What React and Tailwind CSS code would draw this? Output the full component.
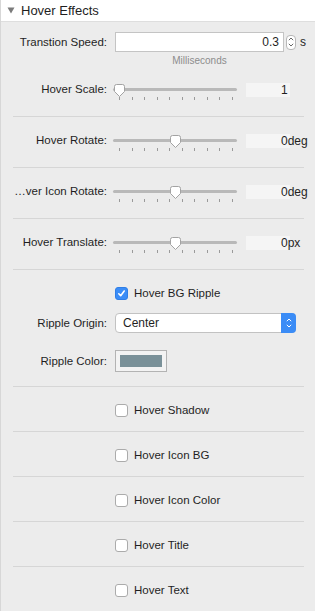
import React from 'react';

const sliders = [
    { label: 'Hover Scale:', value: '1', pos: 0 },
    { label: 'Hover Rotate:', value: '0deg', pos: 0.5 },
    { label: '…ver Icon Rotate:', value: '0deg', pos: 0.5 },
    { label: 'Hover Translate:', value: '0px', pos: 0.5 },
];

const toggles = ['Hover Shadow', 'Hover Icon BG', 'Hover Icon Color', 'Hover Title', 'Hover Text'];

function Divider() {
    return <div className="ml-[12px] mr-[11px] h-px bg-[#d6d6d6]" />;
}

function Label({ children }) {
    return (
        <div className="w-[106px] shrink-0 text-right text-[11.5px] leading-[14px] whitespace-nowrap text-[#1f1f1f]">
            {children}
        </div>
    );
}

function Thumb() {
    return (
        <svg width="13" height="15" viewBox="0 0 13 15">
            <path
                d="M1.5 3.5 A2 2 0 0 1 3.5 1.5 H9.5 A2 2 0 0 1 11.5 3.5 V8.5 L6.5 13.5 L1.5 8.5 Z"
                fill="#fff"
                stroke="#a3a3a3"
                strokeWidth="1"
            />
        </svg>
    );
}

function SliderRow({ label, value, pos }) {
    return (
        <div className="flex items-start h-[20px]">
            <Label>{label}</Label>
            <div className="relative ml-[6px] w-[124px] h-[20px]">
                <div className="mt-[6px] h-[3px] rounded-full bg-[#b9b9b9]" />
                <div className="mt-[6px] flex justify-between pl-[6px] pr-[4px]">
                    {Array.from({ length: 10 }).map((_, i) => (
                        <div key={i} className="w-px h-[3px] bg-[#9a9a9a]" />
                    ))}
                </div>
                <div className="absolute top-[1px]" style={{ left: pos * 111 }}>
                    <Thumb />
                </div>
            </div>
            <div className="ml-[9px] mt-[1px] w-[44px] h-[14px] bg-[#f5f5f5] pl-[35px] text-[12px] leading-[14px] whitespace-nowrap text-[#1f1f1f]">
                {value}
            </div>
        </div>
    );
}

function Checkbox({ checked, label }) {
    return (
        <div className="flex items-center h-[14px] pl-[114px]">
            {checked ? (
                <div className="w-[13px] h-[13px] rounded-[3px] bg-[#3b8df7] border border-[#2f7ee6] flex items-center justify-center">
                    <svg width="9" height="9" viewBox="0 0 9 9">
                        <path d="M1.8 4.8 L3.7 6.7 L7.2 2" fill="none" stroke="#fff" strokeWidth="1.6" strokeLinecap="round" strokeLinejoin="round" />
                    </svg>
                </div>
            ) : (
                <div className="w-[13px] h-[13px] rounded-[3px] bg-white border border-[#ababab]" />
            )}
            <span className="ml-[6px] text-[11.5px] leading-[14px] text-[#1f1f1f] whitespace-nowrap">{label}</span>
        </div>
    );
}

export default function App() {
    return (
        <div className="w-[315px] min-h-[611px] bg-[#ececec] border-l border-[#d7d7d7] font-['Liberation_Sans',Arial,sans-serif]">
            {/* header */}
            <div className="h-[22px] bg-white border-b border-[#dedede] flex items-center">
                <svg className="ml-[6px]" width="8" height="7" viewBox="0 0 8 7">
                    <path d="M0.5 0.5 H7.5 L4 6.5 Z" fill="#7b7b7b" />
                </svg>
                <span className="ml-[6px] text-[13px] leading-[16px] text-[#1e1e1e]">Hover Effects</span>
            </div>

            {/* speed + scale */}
            <div className="pt-[10px] pb-[14px]">
                <div className="flex items-center h-[20px]">
                    <Label>Transtion Speed:</Label>
                    <div className="ml-[8px] w-[169px] h-[20px] bg-white border border-[#c4c4c4] text-right pr-[4px] text-[12px] leading-[18px] text-[#1f1f1f]">
                        0.3
                    </div>
                    <div className="ml-[2px] w-[10px] h-[15px] rounded-[4px] border border-[#b8b8b8] bg-white flex flex-col items-center justify-center gap-[2px]">
                        <svg width="6" height="4" viewBox="0 0 6 4">
                            <path d="M0.8 3.2 L3 1 L5.2 3.2" fill="none" stroke="#555" strokeWidth="0.9" />
                        </svg>
                        <svg width="6" height="4" viewBox="0 0 6 4">
                            <path d="M0.8 0.8 L3 3 L5.2 0.8" fill="none" stroke="#555" strokeWidth="0.9" />
                        </svg>
                    </div>
                    <span className="ml-[4px] text-[12px] text-[#1f1f1f]">s</span>
                </div>
                <div className="ml-[114px] w-[169px] mt-[3px] text-center text-[10px] leading-[12px] text-[#8d8d8d]">
                    Milliseconds
                </div>
                <div className="mt-[15px]">
                    <SliderRow {...sliders[0]} />
                </div>
            </div>

            {sliders.slice(1).map((s) => (
                <React.Fragment key={s.label}>
                    <Divider />
                    <div className="pt-[16px] pb-[14px]">
                        <SliderRow {...s} />
                    </div>
                </React.Fragment>
            ))}

            <Divider />
            {/* ripple */}
            <div className="pt-[16px] pb-[14px]">
                <Checkbox checked label="Hover BG Ripple" />
                <div className="mt-[13px] flex items-center h-[20px]">
                    <Label>Ripple Origin:</Label>
                    <div className="ml-[8px] w-[181px] h-[20px] rounded-[4px] border border-[#c2c2c2] bg-white flex">
                        <span className="flex-1 pl-[7px] text-[12px] leading-[18px] text-[#1f1f1f]">Center</span>
                        <div className="w-[15px] -my-px -mr-px rounded-r-[4px] bg-[#3b8cf6] flex flex-col items-center justify-center gap-[2px]">
                            <svg width="6" height="4" viewBox="0 0 6 4">
                                <path d="M0.8 3.2 L3 1 L5.2 3.2" fill="none" stroke="#fff" strokeWidth="1" />
                            </svg>
                            <svg width="6" height="4" viewBox="0 0 6 4">
                                <path d="M0.8 0.8 L3 3 L5.2 0.8" fill="none" stroke="#fff" strokeWidth="1" />
                            </svg>
                        </div>
                    </div>
                </div>
                <div className="mt-[17px] flex items-center h-[22px]">
                    <Label>Ripple Color:</Label>
                    <div className="ml-[8px] w-[52px] h-[22px] border border-[#b3b3b3] bg-[#f3f3f3] p-[4px]">
                        <div className="w-full h-full bg-[#7a9199]" />
                    </div>
                </div>
            </div>

            {toggles.map((t) => (
                <React.Fragment key={t}>
                    <Divider />
                    <div className="pt-[16px] pb-[14px]">
                        <Checkbox label={t} />
                    </div>
                </React.Fragment>
            ))}
        </div>
    );
}
